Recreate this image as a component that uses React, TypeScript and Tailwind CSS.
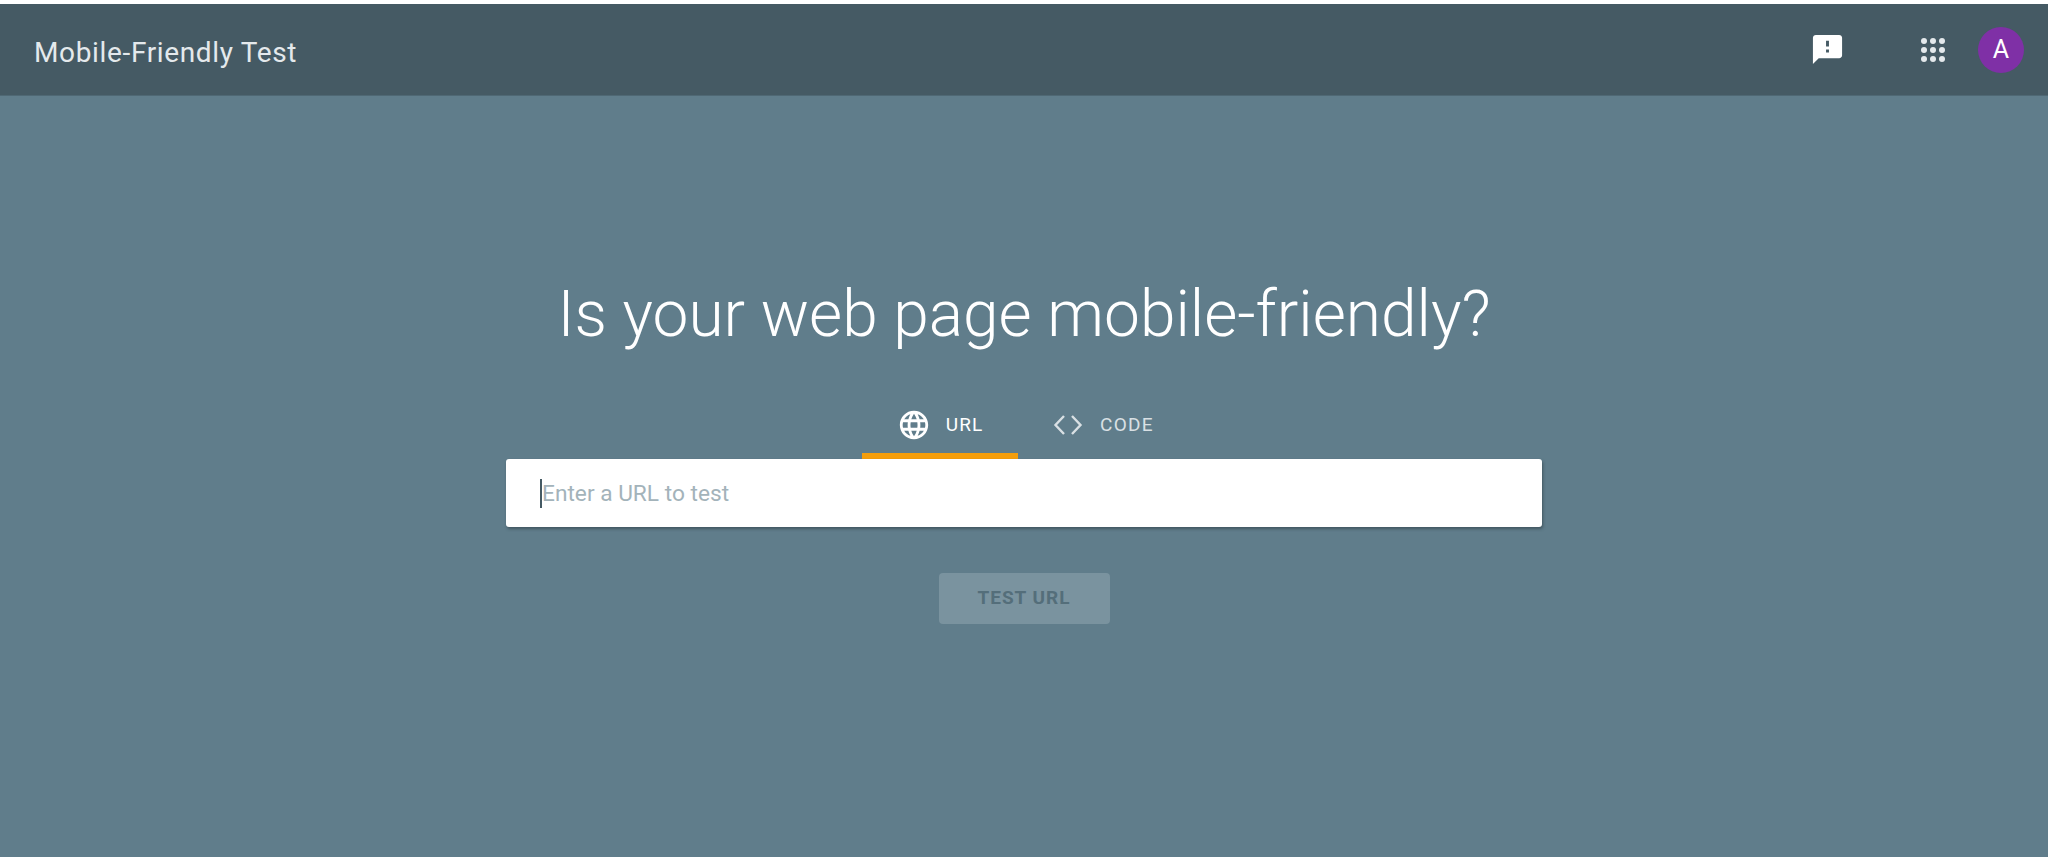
import { useState } from "react";

const GLOBE =
	"M11.99 2C6.47 2 2 6.48 2 12s4.47 10 9.99 10C17.52 22 22 17.52 22 12S17.52 2 11.99 2zm6.93 6h-2.95c-.32-1.25-.78-2.45-1.38-3.56 1.84.63 3.37 1.91 4.33 3.56zM12 4.04c.83 1.2 1.48 2.53 1.91 3.96h-3.82c.43-1.43 1.08-2.76 1.91-3.96zM4.26 14C4.1 13.36 4 12.69 4 12s.1-1.36.26-2h3.38c-.08.66-.14 1.32-.14 2 0 .68.06 1.34.14 2H4.26zm.82 2h2.95c.32 1.25.78 2.45 1.38 3.56-1.84-.63-3.37-1.9-4.33-3.56zm2.95-8H5.08c.96-1.66 2.49-2.93 4.33-3.56C8.81 5.55 8.35 6.75 8.03 8zM12 19.96c-.83-1.2-1.48-2.53-1.91-3.96h3.82c-.43 1.43-1.08 2.76-1.91 3.96zM14.34 14H9.66c-.09-.66-.16-1.32-.16-2 0-.68.07-1.35.16-2h4.68c.09.65.16 1.32.16 2 0 .68-.07 1.34-.16 2zm.25 5.56c.6-1.11 1.06-2.31 1.38-3.56h2.95c-.96 1.65-2.49 2.93-4.33 3.56zM16.36 14c.08-.66.14-1.32.14-2 0-.68-.06-1.34-.14-2h3.38c.16.64.26 1.31.26 2s-.1 1.36-.26 2h-3.38z"

const FEEDBACK =
	"M20 2H4c-1.1 0-1.99.9-1.99 2L2 22l4-4h14c1.1 0 2-.9 2-2V4c0-1.1-.9-2-2-2zm-7 12h-2v-2h2v2zm0-4h-2V6h2v4z"

const AppsIcon = () => (
	<svg viewBox="0 0 24 24" className="w-[24px] h-[24px] fill-[#e4e9ec]">
		{[3, 12, 21].map((cy) =>
			[3, 12, 21].map((cx) => <circle key={`${cx}-${cy}`} cx={cx} cy={cy} r={3} />)
		)}
	</svg>
)

export default function App() {
	const [url, setUrl] = useState("")

	return (
		<div className="min-h-[857px] bg-white pt-[4px] font-['Roboto',sans-serif] overflow-hidden">
			<div className="h-[853px] flex flex-col bg-[#607d8b]">
				{/* top bar */}
				<header className="h-[92px] shrink-0 flex items-center bg-[#455a64] pl-[34px] pr-[24px] border-b border-[#4f6874]">
					<h1 className="mt-[6px] text-[28px] leading-none text-[#e4e9ec] tracking-[0.65px]">Mobile-Friendly Test</h1>
					<div className="ml-auto flex items-center">
						<svg viewBox="0 0 24 24" className="w-[35px] h-[35px] fill-white mr-[76px] -mt-[1px]">
							<path d={FEEDBACK} />
						</svg>
						<AppsIcon />
						<div className="ml-[33px] w-[46px] h-[46px] rounded-full bg-[#7f30a6] text-white text-[25px] flex items-center justify-center">
							A
						</div>
					</div>
				</header>

				<main className="flex flex-col items-center">
					<h2 className="mt-[179px] text-[64px] leading-[80px] font-light text-white">
						Is your web page mobile-friendly?
					</h2>

					{/* tabs */}
					<div className="mt-[44px] h-[60px] flex">
						<div className="w-[156px] flex items-center justify-center gap-[15px] pb-[2px] border-b-[6px] border-[#f59e0b] text-white">
							<svg viewBox="0 0 24 24" className="w-[34px] h-[34px] fill-white">
								<path d={GLOBE} />
							</svg>
							<span className="text-[19px] tracking-[1px]">URL</span>
						</div>
						<div className="w-[168px] flex items-center justify-center gap-[17px] pl-[3px] pb-[2px] border-b-[6px] border-transparent text-[#d9e0e4]">
							<svg viewBox="0 0 30 24" className="w-[30px] h-[24px] fill-none stroke-[#d9e0e4] stroke-[2.4]">
								<path d="M11 3 2.5 12l8.500 9M19 3l8.500 9-8.500 9" />
							</svg>
							<span className="text-[19px] tracking-[1.3px]">CODE</span>
						</div>
					</div>

					{/* url field */}
					<div className="w-[1036px] h-[68px] flex items-center bg-white rounded-[3px] shadow-[1px_2px_3px_rgba(38,50,56,0.5)] pl-[34px] pr-[24px]">
						<div className="w-[2px] h-[29px] bg-[#455a64] shrink-0" />
						<input
							value={url}
							onChange={(e) => setUrl(e.target.value)}
							placeholder="Enter a URL to test"
							className="flex-1 pt-[2px] outline-none text-[22.7px] text-[#37474f] placeholder:text-[#a3b3ba]"
						/>
					</div>

					<button className="mt-[46px] w-[171px] h-[51px] rounded-[4px] bg-[#7a939f] text-[#546e7a] text-[19px] font-bold tracking-[1px]">
						TEST URL
					</button>
				</main>
			</div>
		</div>
	)
}
